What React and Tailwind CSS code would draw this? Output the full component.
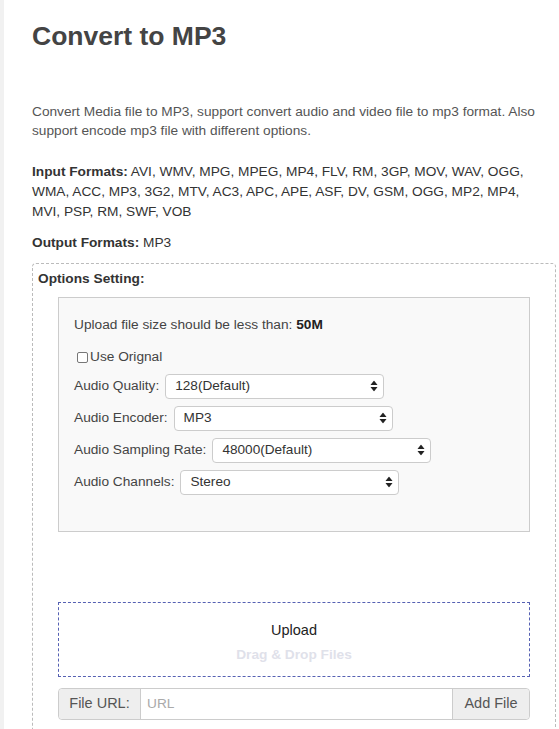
import React, { useState } from "react";

const selectCls =
  "h-[25px] w-[219px] appearance-none rounded-[4px] border border-[#ccc] bg-white pl-[9px] pr-6 text-[13.6px] text-[#333] focus:outline-none";

const Arrows = () => (
  <svg
    className="pointer-events-none absolute right-[6px] top-1/2 -translate-y-1/2"
    width="8"
    height="11"
    viewBox="0 0 8 11"
  >
    <path d="M4 0 L7.5 4.5 H0.5 Z" fill="#222" />
    <path d="M4 11 L7.5 6.5 H0.5 Z" fill="#222" />
  </svg>
);

const SelectRow = ({ label, options, value, onChange }) => (
  <div className="flex h-[32px] items-center">
    <span className="mr-[6px]">{label}</span>
    <div className="relative">
      <select value={value} onChange={onChange} className={selectCls}>
        {options.map((o) => (
          <option key={o} value={o}>
            {o}
          </option>
        ))}
      </select>
      <Arrows />
    </div>
  </div>
);

const App = () => {
  const [opts, setOpts] = useState({
    quality: "128(Default)",
    encoder: "MP3",
    rate: "48000(Default)",
    channels: "Stereo",
  });
  const [useOriginal, setUseOriginal] = useState(false);
  const [url, setUrl] = useState("");

  const set = (k) => (e) => setOpts({ ...opts, [k]: e.target.value });

  return (
    <div className="flex min-h-screen bg-white font-['Liberation_Sans',Arial,sans-serif] text-[13.7px] text-[#444]">
      <div className="w-[4px] shrink-0 bg-[#f1f1f1]" />
      <div className="flex-1 pl-[28px] pr-[3px]">
        <h1 className="pt-[21px] text-[26.5px] font-bold leading-[30px] text-[#444]">
          Convert to MP3
        </h1>

        <p className="mt-[51px] leading-[19px] text-[#555]">
          Convert Media file to MP3, support convert audio and video file to mp3
          format. Also support encode mp3 file with different options.
        </p>

        <p className="mr-[14px] mt-[22px] leading-[20px] text-[#333]">
          <b className="font-bold">Input Formats:</b> AVI, WMV, MPG, MPEG, MP4,
          FLV, RM, 3GP, MOV, WAV, OGG, WMA, ACC, MP3, 3G2, MTV, AC3, APC, APE,
          ASF, DV, GSM, OGG, MP2, MP4, MVI, PSP, RM, SWF, VOB
        </p>

        <p className="mt-[11px] leading-[20px] text-[#333]">
          <b className="font-bold">Output Formats:</b> MP3
        </p>

        <div className="mt-[10px] rounded-tl-[4px] rounded-tr-[4px] border border-b-0 border-dashed border-[#bbb] pb-[10px] pl-[5px]">
          <div className="pt-[5px] font-bold leading-[20px] text-[#333]">
            Options Setting:
          </div>

          <div className="ml-[20px] mr-[25px] mt-[8px] h-[235px] border border-[#ccc] bg-[#f9f9f9] pl-[15px] pt-[17px] text-[#444]">
            <div className="leading-[20px]">
              Upload file size should be less than:{" "}
              <b className="font-bold text-[#222]">50M</b>
            </div>

            <label className="mt-[12px] flex h-[20px] items-center">
              <input
                type="checkbox"
                checked={useOriginal}
                onChange={(e) => setUseOriginal(e.target.checked)}
                className="mr-[2px] ml-[3px] h-[11px] w-[11px] appearance-none rounded-[2px] border border-[#777] bg-white"
              />
              Use Orignal
            </label>

            <div className="mt-[3px]">
              <SelectRow
                label="Audio Quality:"
                options={["128(Default)", "64", "96", "160", "192", "256", "320"]}
                value={opts.quality}
                onChange={set("quality")}
              />
              <SelectRow
                label="Audio Encoder:"
                options={["MP3", "LAME"]}
                value={opts.encoder}
                onChange={set("encoder")}
              />
              <SelectRow
                label="Audio Sampling Rate:"
                options={["48000(Default)", "44100", "22050", "11025"]}
                value={opts.rate}
                onChange={set("rate")}
              />
              <SelectRow
                label="Audio Channels:"
                options={["Stereo", "Mono"]}
                value={opts.channels}
                onChange={set("channels")}
              />
            </div>
          </div>

          <div className="ml-[20px] mr-[25px] mt-[70px] flex h-[75px] flex-col items-center border border-dashed border-[#5661b3] pt-[17px]">
            <div className="text-[14.5px] leading-[20px] text-[#222]">Upload</div>
            <div className="mt-[7px] font-bold leading-[16px] text-[#dfe1ea]">
              Drag &amp; Drop Files
            </div>
          </div>

          <div className="ml-[20px] mr-[25px] mt-[11px] flex h-[32px] rounded-[4px] border border-[#ccc] text-[14.5px]">
            <span className="flex w-[82px] items-center justify-center rounded-l-[4px] border-r border-[#ccc] bg-[#eee] text-[#555]">
              File URL:
            </span>
            <input
              value={url}
              onChange={(e) => setUrl(e.target.value)}
              placeholder="URL"
              className="min-w-0 flex-1 bg-white px-[6px] text-[13.7px] placeholder:text-[#aaa] focus:outline-none"
            />
            <button className="w-[77px] rounded-r-[4px] border-l border-[#ccc] bg-[#eee] text-[#555]">
              Add File
            </button>
          </div>
        </div>
      </div>
    </div>
  );
};

export default App;
